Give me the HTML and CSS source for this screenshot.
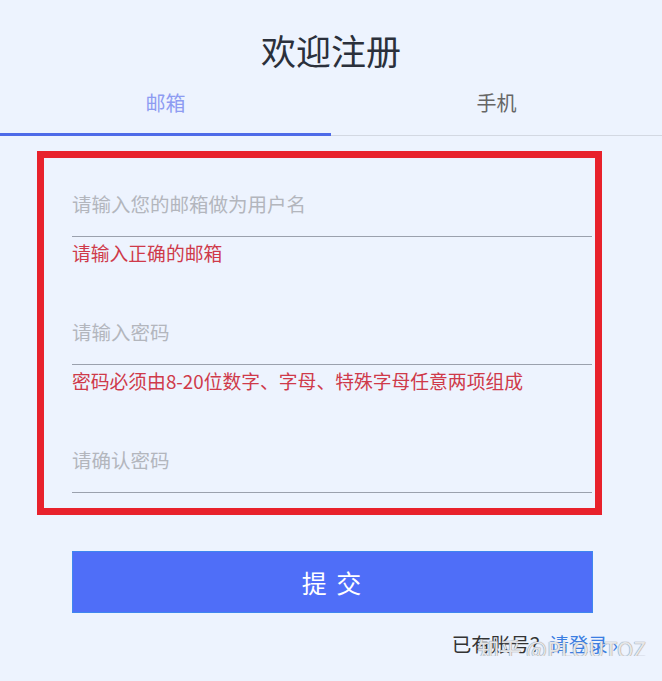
FILE: index.html
```html
<!DOCTYPE html>
<html lang="zh-CN">
<head>
  <meta charset="UTF-8">
  <meta name="viewport" content="width=device-width, initial-scale=1.0">
  <title>欢迎注册</title>
  <link rel="stylesheet" href="styles.css">
</head>
<body>

  <h1 class="title">欢迎注册</h1>

  <div class="tabs">
    <div class="tab active">邮箱</div>
    <div class="tab">手机</div>
  </div>

  <form class="form-box">
    <div class="field">
      <input type="text" placeholder="请输入您的邮箱做为用户名">
      <div class="error">请输入正确的邮箱</div>
    </div>
    <div class="field">
      <input type="password" placeholder="请输入密码">
      <div class="error">密码必须由8-20位数字、字母、特殊字母任意两项组成</div>
    </div>
    <div class="field">
      <input type="password" placeholder="请确认密码">
    </div>
  </form>

  <button class="submit" type="button">提 交</button>

  <div class="footer">
    已有账号？<a href="#" class="login-link">请登录 ›</a>
    <span class="watermark">知乎 @PLOUTOZ</span>
  </div>

</body>
</html>
```

FILE: styles.css
```css
body {
  margin: 0;
  background: #edf3fe;
  font-family: "Noto Sans CJK SC", "Noto Sans", sans-serif;
  color: #333;
}

.title {
  margin: 0;
  padding-top: 30px;
  font-size: 35px;
  line-height: 40px;
  font-weight: normal;
  text-align: center;
  color: #2b303b;
}

.tabs {
  display: flex;
  border-bottom: 1px solid #d3d8e2;
}

.tab {
  flex: 1;
  text-align: center;
  font-size: 20px;
  line-height: 24px;
  padding: 21px 0 18px;
  color: #666;
  border-bottom: 3px solid transparent;
  margin-bottom: -1px;
}

.tab.active {
  color: #8e9cf2;
  border-bottom-color: #4d6ae8;
}

.form-box {
  box-sizing: border-box;
  width: 565px;
  margin: 15px 0 0 37px;
  border: 7px solid #e8212c;
  padding: 34px 3px 15px 28px;
  display: flex;
  flex-direction: column;
  gap: 56px;
}

.field input {
  display: block;
  width: 100%;
  box-sizing: border-box;
  border: none;
  border-bottom: 1.5px solid #9ba1ad;
  background: transparent;
  padding: 0 0 20px;
  font-family: inherit;
  font-size: 19.5px;
  line-height: 24px;
  outline: none;
}

.field input::placeholder {
  color: #b3b6bd;
}

.error {
  margin-top: 5px;
  font-size: 18.8px;
  line-height: 22px;
  color: #cf3a4a;
}

.submit {
  display: block;
  box-sizing: border-box;
  width: 521px;
  height: 62px;
  margin: 36px 0 0 72px;
  background: #4f6ef8;
  border: 1px solid #3f86ef;
  color: #fff;
  font-family: inherit;
  font-size: 25px;
  letter-spacing: 2px;
}

.footer {
  position: relative;
  margin-top: 19px;
  padding-right: 44px;
  text-align: right;
  font-size: 19.5px;
  line-height: 24px;
  color: #333;
}

.login-link {
  color: #3b7ee2;
  text-decoration: none;
}

.watermark {
  position: absolute;
  right: 16px;
  top: 4px;
  font-size: 22px;
  color: rgba(255, 255, 255, 0.8);
  text-shadow: 0 0 1px #8a8f99, 0 0 1px #8a8f99;
}
```
